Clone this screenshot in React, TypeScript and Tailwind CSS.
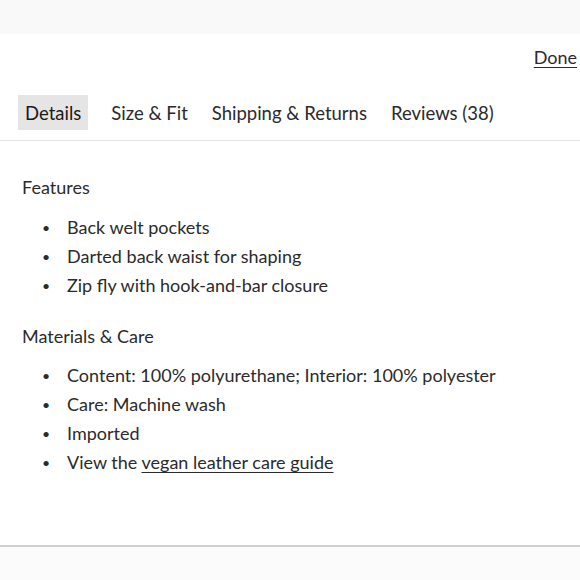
import React from "react";

const FONT = { fontFamily: "Lato, 'Liberation Sans', sans-serif" };

const features = ["Back welt pockets", "Darted back waist for shaping", "Zip fly with hook-and-bar closure"];

function Bullet({ children }: { children: React.ReactNode }) {
  return (
    <li className="flex h-[29px] items-center">
      <span className="w-[45px] pl-[20px] text-[14px]">•</span>
      <span>{children}</span>
    </li>
  );
}

export default function App() {
  const tabs = ["Details", "Size & Fit", "Shipping & Returns", "Reviews (38)"];
  return (
    <div className="flex h-[580px] w-[580px] flex-col overflow-hidden bg-[#fafafa] text-[#2b2b2b]" style={FONT}>
      <div className="h-[34px] shrink-0 bg-[#f9f9f9]" />
      <div className="flex h-[511px] shrink-0 flex-col bg-white">
        <div className="flex h-[34px] items-end justify-end pr-[3px]">
          <button className="text-[18px] leading-[22px] underline underline-offset-[3px]">Done</button>
        </div>
        <div className="mt-[27px] flex h-[46px] items-start gap-[10px] border-b border-[#e6e6e6] pl-[18px]">
          {tabs.map((t, i) => (
            <div
              key={t}
              className={`flex h-[35px] items-center px-[7px] pt-[2px] text-[18.5px] ${i === 0 ? "mr-[6px] bg-[#e5e5e5] text-[#1a1a1a]" : ""}`}
            >
              {t}
            </div>
          ))}
        </div>
        <div className="px-[22px] pt-[33px] text-[18px]">
          <div className="flex h-[27px] items-center">Features</div>
          <ul className="mt-[12px]">
            {features.map((f) => (
              <Bullet key={f}>{f}</Bullet>
            ))}
          </ul>
          <div className="mt-[23px] flex h-[27px] items-center">Materials &amp; Care</div>
          <ul className="mt-[11px]">
            <Bullet>Content: 100% polyurethane; Interior: 100% polyester</Bullet>
            <Bullet>Care: Machine wash</Bullet>
            <Bullet>Imported</Bullet>
            <Bullet>
              View the <span className="underline underline-offset-[3px]">vegan leather care guide</span>
            </Bullet>
          </ul>
        </div>
      </div>
      <div className="h-[2px] shrink-0 bg-[#cfcfcf]" />
      <div className="flex-1 bg-[#fbfbfb]" />
    </div>
  );
}
